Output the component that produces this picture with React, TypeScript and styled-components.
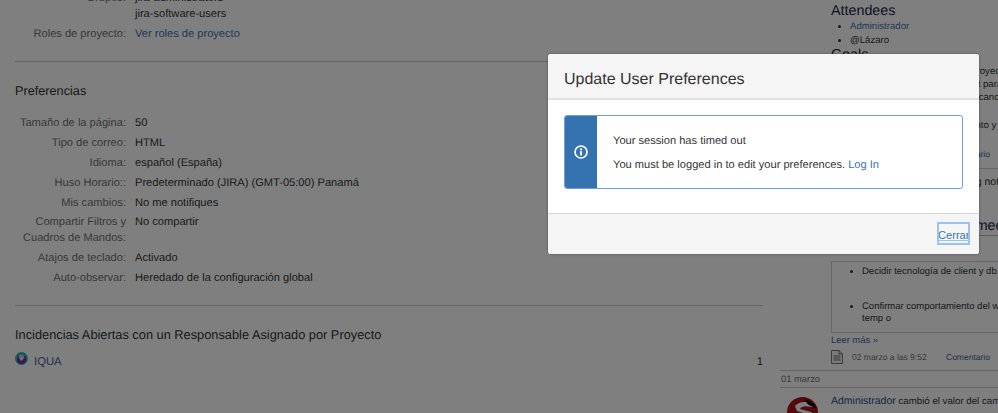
import React from "react";
import styled, { createGlobalStyle } from "styled-components";

const Global = createGlobalStyle`
  html, body { margin: 0; padding: 0; background: #fff; }
  body { font-family: "Liberation Sans", Arial, sans-serif; font-size: 12px; color: #333; text-rendering: geometricPrecision; }
`;

const Page = styled.div`
  position: relative;
  width: 998px;
  height: 413px;
  overflow: hidden;
  display: flex;
  background: #fff;
`;

const Main = styled.main`
  width: 748px;
  margin-left: 15px;
  flex: none;
  margin-top: -12px;
`;

const Details = styled.dl`
  margin: 0;
  display: flex;
  flex-direction: column;
`;

const Row = styled.div<{ $lift?: boolean }>`
  display: grid;
  grid-template-columns: 111px 1fr;
  column-gap: 9px;
  margin-top: ${(p) => (p.$lift ? -1 : 0)}px;
`;

const Label = styled.dt`
  text-align: right;
  color: #707070;
  font-size: 11.1px;
  line-height: 16px;
  padding: 2px 0;
`;

const Value = styled.dd`
  margin: 0;
  color: #333;
  font-size: 11.1px;
  line-height: 16px;
  padding: 2px 0;
`;

const Link = styled.a`
  color: #3b73af;
  text-decoration: none;
`;

const Rule = styled.hr<{ $top: number; $bottom: number }>`
  border: 0;
  height: 1px;
  background: #ccc;
  margin: ${(p) => p.$top}px 0 ${(p) => p.$bottom}px;
`;

const SectionTitle = styled.h3<{ $bottom: number; $size: number }>`
  margin: 0 0 ${(p) => p.$bottom}px;
  font-weight: 400;
  font-size: ${(p) => p.$size}px;
  line-height: 18px;
  color: #333;
`;

const ProjectRow = styled.div`
  display: flex;
  align-items: center;
  font-size: 11.3px;
  line-height: 18px;
`;

const ProjectGlyph = styled.span`
  display: flex;
  flex: none;
  margin-top: -7px;
`;

const ProjectName = styled(Link)`
  margin-left: 6px;
  flex: 1;
  color: #3b5f9b;
`;

const Count = styled.span`
  color: #333;
`;

const Side = styled.aside`
  margin-left: 17px;
  width: 218px;
  flex: none;
  color: #333;
  overflow: hidden;
`;

const Indented = styled.div`
  margin-left: 51px;
  white-space: nowrap;
`;

const SideHeading = styled.h2<{ $top?: number; $lh?: number }>`
  margin: ${(p) => p.$top ?? 0}px 0 0;
  font-weight: 400;
  font-size: 14.3px;
  line-height: ${(p) => p.$lh ?? 18}px;
  color: #172b4d;
  white-space: nowrap;
`;

const Bullets = styled.ul`
  margin: 0;
  padding-left: 19px;
  font-size: 9.6px;
  line-height: 14px;
`;

const Para = styled.div<{ $top?: number }>`
  margin-top: ${(p) => p.$top ?? 0}px;
  line-height: 13px;
  font-size: 9.6px;
`;

const ActivityLine = styled.div<{ $top?: number }>`
  margin-top: ${(p) => p.$top ?? 0}px;
  line-height: 13px;
  font-size: 10.5px;
`;

const MetaRow = styled.div<{ $top?: number }>`
  margin-top: ${(p) => p.$top ?? 0}px;
  display: flex;
  align-items: center;
  height: 14px;
  font-size: 8.5px;
  color: #707070;
`;

const MetaDate = styled.span`
  margin-left: 9px;
  width: 94px;
  flex: none;
`;

const MetaLink = styled(Link)`
  color: #3b5f9b;
`;

const TimelineRule = styled.div<{ $top: number }>`
  height: 1px;
  background: #ccc;
  margin-top: ${(p) => p.$top}px;
`;

const HeadingRule = styled.div`
  height: 1px;
  background: #bbb;
`;

const CommentBox = styled.div`
  margin-top: 25px;
  border: solid #ccc;
  border-width: 1px 0 1px 1px;
  height: 70px;
  font-size: 9.5px;
  line-height: 12px;
`;

const BoxList = styled.ul`
  margin: 0;
  padding: 4px 0 0 30px;
`;

const BoxItem = styled.li`
  margin-bottom: 23px;
  white-space: normal;
  width: 170px;
`;

const ReadMore = styled(Link)`
  display: block;
  line-height: 13px;
  font-size: 9.4px;
  color: #3b5f9b;
`;

const DayLabel = styled.div`
  padding-left: 1px;
  height: 16px;
  line-height: 15px;
  font-size: 9.4px;
  color: #707070;
`;

const ActivityRow = styled.div`
  display: flex;
  margin-top: 6px;
  padding-left: 7px;
  gap: 13px;
  white-space: nowrap;
  line-height: 14px;
  font-size: 9.7px;
`;

const AvatarSlot = styled.span`
  flex: none;
  display: block;
  margin-top: 3px;
`;

const Actor = styled(Link)`
  color: #205081;
  font-size: 10.5px;
`;

const Blanket = styled.div`
  position: absolute;
  inset: 0;
  background: rgba(0, 0, 0, 0.5);
`;

const Dialog = styled.section`
  position: absolute;
  left: 548px;
  top: 54px;
  width: 431px;
  height: 200px;
  display: flex;
  flex-direction: column;
  background: #fff;
  border-radius: 3px;
  box-shadow: 0 0 3px rgba(0, 0, 0, 0.35);
  overflow: hidden;
`;

const DialogHeader = styled.header`
  height: 46px;
  flex: none;
  box-sizing: border-box;
  padding: 7px 16px 0;
  display: flex;
  align-items: center;
  background: #f5f5f5;
  border-bottom: 2px solid #e2e2e2;
`;

const DialogTitle = styled.h2`
  margin: 0;
  font-weight: 400;
  font-size: 16px;
  color: #333;
`;

const DialogBody = styled.div`
  flex: 1;
  padding: 15px 16px 0 16px;
  box-sizing: border-box;
`;

const Message = styled.div`
  display: flex;
  width: 399px;
  height: 74px;
  box-sizing: border-box;
  border: 1px solid #6f9fd6;
  border-radius: 3px;
  overflow: hidden;
`;

const MessageIcon = styled.div`
  width: 32px;
  flex: none;
  background: #3572b0;
  display: flex;
  align-items: center;
  justify-content: center;
`;

const MessageText = styled.div`
  padding: 18px 16px 0;
  font-size: 11.1px;
  line-height: 14px;
  color: #333;
`;

const MessageLine = styled.p`
  margin: 0 0 10px;
`;

const DialogFooter = styled.footer`
  height: 41px;
  flex: none;
  box-sizing: border-box;
  background: #f5f5f5;
  border-top: 1px solid #d6d6d6;
  display: flex;
  justify-content: flex-end;
  align-items: flex-start;
  padding: 8px 9px 0 0;
`;

const CloseButton = styled.button`
  position: relative;
  width: 33px;
  height: 23px;
  box-sizing: border-box;
  padding: 2px 0 0 1px;
  border: 0;
  outline: 2px solid #9cc2f2;
  outline-offset: -2px;
  background: transparent;
  font: inherit;
  font-size: 11.1px;
  line-height: 14px;
  color: #3b73af;
  text-decoration: underline;
  white-space: nowrap;
  text-align: left;
  display: block;

  &::after {
    content: "";
    position: absolute;
    left: 0;
    right: 0;
    bottom: 4px;
    height: 1px;
    background: #9cc2f2;
  }
`;

const InfoIcon = () => (
  <svg width="14" height="14" viewBox="0 0 14 14" aria-hidden="true">
    <circle cx="7" cy="7" r="6" fill="none" stroke="#fff" strokeWidth="1.7" />
    <circle cx="7" cy="4.4" r="1.1" fill="#fff" />
    <rect x="6" y="6.2" width="2" height="4.3" fill="#fff" />
  </svg>
);

const ProjectIcon = () => (
  <svg width="13" height="13" viewBox="0 0 13 13" aria-hidden="true">
    <circle cx="6.5" cy="6.5" r="6.5" fill="#2fb5b5" />
    <circle cx="6.5" cy="7.5" r="4.5" fill="#6a2fb0" />
    <circle cx="6.5" cy="5.2" r="2.6" fill="#b9c4e8" />
    <rect x="5.4" y="4.5" width="2.2" height="4" fill="#dfe6f7" />
  </svg>
);

const DocIcon = () => (
  <svg width="12" height="14" viewBox="0 0 12 14" aria-hidden="true" style={{ flex: "none" }}>
    <path d="M.5.5h7.5l3.500 3.500v9.500H.5z" fill="#f2f2f2" stroke="#777" />
    <path d="M8 .5V4h3.500M2.500 6h7M2.500 8h7M2.500 10h7" fill="none" stroke="#777" />
  </svg>
);

const Avatar = () => (
  <svg width="31" height="31" viewBox="0 0 31 31" aria-hidden="true" style={{ display: "block" }}>
    <circle cx="15.500" cy="15.500" r="15.500" fill="#b01217" />
    <path d="M8 9C13 3 24 4 29 10L20 9.500C17 9 14 10 13 12L24 15C28 17 28 22 26 26L22 18L10 14Z" fill="#fff" />
    <path d="M17 2C23 3 28 6 30 12L21 7.500Z" fill="#111" />
  </svg>
);

const prefs: { label: string; value: string; lift?: boolean }[] = [
  { label: "Tamaño de la página:", value: "50" },
  { label: "Tipo de correo:", value: "HTML" },
  { label: "Idioma:", value: "español (España)" },
  { label: "Huso Horario::", value: "Predeterminado (JIRA) (GMT-05:00) Panamá" },
  { label: "Mis cambios:", value: "No me notifiques" },
  { label: "Compartir Filtros y Cuadros de Mandos:", value: "No compartir", lift: true },
  { label: "Atajos de teclado:", value: "Activado" },
  { label: "Auto-observar:", value: "Heredado de la configuración global" },
];

export default function App() {
  return (
    <>
      <Global />
      <Page>
        <Main>
          <Details>
            <Row>
              <Label>Grupos:</Label>
              <Value>
                jira-administrators
                <br />
                jira-software-users
              </Value>
            </Row>
            <Row>
              <Label>Roles de proyecto:</Label>
              <Value>
                <Link href="#">Ver roles de proyecto</Link>
              </Value>
            </Row>
          </Details>
          <Rule $top={17} $bottom={20} />
          <SectionTitle $bottom={13} $size={12.7}>Preferencias</SectionTitle>
          <Details>
            {prefs.map((p) => (
              <Row key={p.label} $lift={p.lift}>
                <Label>{p.label}</Label>
                <Value>{p.value}</Value>
              </Row>
            ))}
          </Details>
          <Rule $top={17} $bottom={20} />
          <SectionTitle $bottom={9} $size={12.8}>Incidencias Abiertas con un Responsable Asignado por Proyecto</SectionTitle>
          <ProjectRow>
            <ProjectGlyph>
              <ProjectIcon />
            </ProjectGlyph>
            <ProjectName href="#">IQUA</ProjectName>
            <Count>1</Count>
          </ProjectRow>
        </Main>
        <Side>
          <Indented>
            <SideHeading $top={2}>Attendees</SideHeading>
            <Bullets>
              <li>
                <Link href="#">Administrador</Link>
              </li>
              <li>@Lázaro</li>
            </Bullets>
            <SideHeading $lh={15}>Goals</SideHeading>
            <Para $top={2}>Definir y revisar los objetivos del proyecto</Para>
            <Para>Preparar todas las tareas del sprint para</Para>
            <Para>Revisar la fecha de entrega y su alcance</Para>
            <Para $top={15}>Confirmar con todos el requerimiento y</Para>
            <MetaRow $top={15}>
              <DocIcon />
              <MetaDate>02 marzo a las 9:52</MetaDate>
              <MetaLink href="#">Comentario</MetaLink>
            </MetaRow>
          </Indented>
          <TimelineRule $top={7} />
          <Indented>
            <ActivityLine $top={7}>Administrador añadió el meeting notes</ActivityLine>
            <SideHeading $top={28}>Meeting notes and my meetings</SideHeading>
            <HeadingRule />
            <CommentBox>
              <BoxList>
                <BoxItem>Decidir tecnología de client y db.</BoxItem>
                <BoxItem>Confirmar comportamiento del widget temp o</BoxItem>
              </BoxList>
            </CommentBox>
            <ReadMore href="#">Leer más »</ReadMore>
            <MetaRow $top={4}>
              <DocIcon />
              <MetaDate>02 marzo a las 9:52</MetaDate>
              <MetaLink href="#">Comentario</MetaLink>
            </MetaRow>
          </Indented>
          <TimelineRule $top={6} />
          <DayLabel>01 marzo</DayLabel>
          <TimelineRule $top={0} />
          <ActivityRow>
            <AvatarSlot>
              <Avatar />
            </AvatarSlot>
            <span>
              <Actor href="#">Administrador</Actor> cambió el valor del campo
            </span>
          </ActivityRow>
        </Side>
        <Blanket />
        <Dialog>
          <DialogHeader>
            <DialogTitle>Update User Preferences</DialogTitle>
          </DialogHeader>
          <DialogBody>
            <Message>
              <MessageIcon>
                <InfoIcon />
              </MessageIcon>
              <MessageText>
                <MessageLine>Your session has timed out</MessageLine>
                <MessageLine>
                  You must be logged in to edit your preferences. <Link href="#">Log In</Link>
                </MessageLine>
              </MessageText>
            </Message>
          </DialogBody>
          <DialogFooter>
            <CloseButton>Cerrar</CloseButton>
          </DialogFooter>
        </Dialog>
      </Page>
    </>
  );
}
